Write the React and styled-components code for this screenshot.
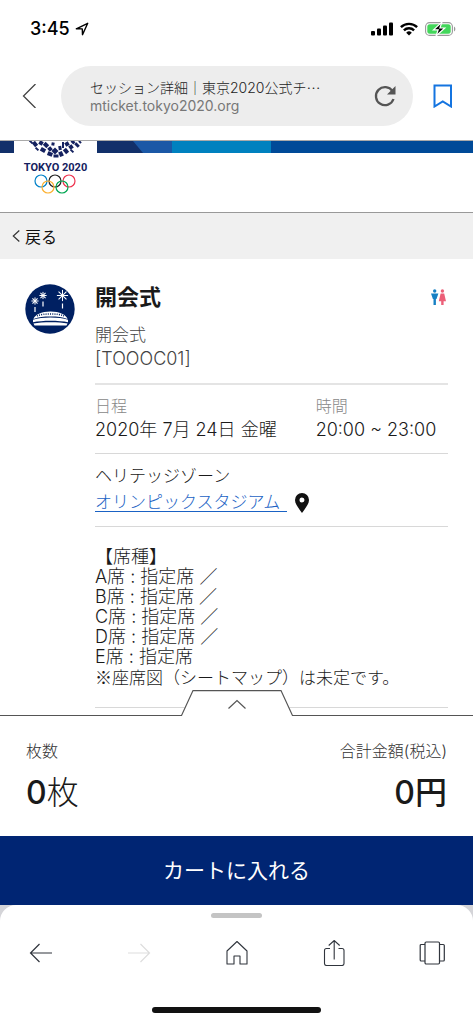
import React from "react";
import styled, { createGlobalStyle } from "styled-components";

const GlobalStyle = createGlobalStyle`
    * {
        box-sizing: border-box;
    }
    body {
        margin: 0;
        background: #fff;
        color: #1a1a1a;
        font-family: Inter, "Noto Sans CJK JP", sans-serif;
        font-size: 17px;
        font-weight: 300;
    }
    button {
        border: 0;
        padding: 0;
        background: none;
        color: inherit;
        font: inherit;
        cursor: pointer;
    }
    svg {
        display: block;
    }
    h1, h2, p, dl, dd, ul {
        margin: 0;
        padding: 0;
    }
`;

const Page = styled.div`
    min-height: 100vh;
    display: flex;
    flex-direction: column;
`;

const StatusBar = styled.div`
    height: 58px;
    padding: 0 17px 0 30px;
    display: flex;
    align-items: center;
    justify-content: space-between;
    color: #000;
`;

const StatusGroup = styled.div`
    display: flex;
    align-items: center;
    gap: ${(props) => props.$gap}px;
`;

const Clock = styled.span`
    font-size: 18px;
    font-weight: 500;
    line-height: 24px;
`;

const BrowserBar = styled.div`
    padding: 8px 18px 14px 17px;
    display: flex;
    align-items: center;
    border-bottom: 1px solid #aaa;
`;

const IconButton = styled.button`
    width: ${(props) => props.$size || 26}px;
    height: ${(props) => props.$size || 26}px;
    display: flex;
    align-items: center;
    justify-content: center;
    flex: none;
`;

const AddressBar = styled.div`
    flex: 1;
    min-width: 0;
    height: 60px;
    margin: 0 18px 0 20px;
    padding: 0 16px 0 29px;
    display: flex;
    align-items: center;
    justify-content: space-between;
    border-radius: 30px;
    background: #ededed;
`;

const Address = styled.button`
    display: flex;
    flex-direction: column;
    min-width: 0;
    text-align: left;
    font-size: 14px;
    line-height: 18px;
`;

const PageTitle = styled.span`
    color: #222;
    white-space: nowrap;
`;

const Japanese = styled.span`
    font-family: "Noto Sans CJK JP", sans-serif;
`;

const Host = styled.span`
    color: #777;
    font-weight: 400;
`;

const Brand = styled.header`
    height: 72px;
    padding-left: 14px;
    border-bottom: 1px solid #999;
    background: linear-gradient(#004a98, #004a98) 0 0 / 100% 12px no-repeat;
    display: flex;
    align-items: flex-start;
    position: relative;
`;

const Stripe = styled.svg`
    position: absolute;
    left: 0;
    top: 0;
`;

const LogoLink = styled.a`
    position: relative;
    background: #fff;
`;

const BackBar = styled.nav`
    height: 46px;
    padding: 0 12px;
    display: flex;
    align-items: center;
    background: #f0f0f0;
`;

const BackLink = styled.a`
    display: flex;
    align-items: center;
    gap: 5px;
    color: #111;
    font-size: 16px;
    font-weight: 400;
    text-decoration: none;
`;

const Session = styled.main`
    flex: 1;
    padding: 22px 25px 0;
    display: flex;
    align-items: flex-start;
    gap: 20px;
`;

const Badge = styled.div`
    padding-top: 3px;
    flex: none;
`;

const Details = styled.div`
    flex: 1;
    min-width: 0;
`;

const Section = styled.section`
    padding: ${(props) => props.$pad};
    border-bottom: ${(props) => props.$line || 1}px solid ${(props) => (props.$line ? "#e4e4e4" : "#d8d8d8")};
`;

const TitleRow = styled.div`
    display: flex;
    align-items: center;
    justify-content: space-between;
    margin-bottom: 10px;
    padding-right: 2px;
`;

const Title = styled.h1`
    font-size: 22px;
    font-weight: 700;
    line-height: 32px;
`;

const Text = styled.p`
    color: ${(props) => props.$color || "#1a1a1a"};
    font-size: ${(props) => props.$size || 17}px;
    line-height: ${(props) => props.$height || 24}px;
`;

const Schedule = styled.dl`
    display: grid;
    grid-template-columns: 5fr 3fr;
`;

const Term = styled.dt`
    color: #888;
    font-size: 16px;
    line-height: 23px;
`;

const Value = styled.dd`
    font-size: 18px;
    line-height: 24px;
    white-space: nowrap;
`;

const Venue = styled.div`
    display: flex;
    align-items: center;
    gap: 8px;
`;

const VenueLink = styled.a`
    color: #1a62c4;
    line-height: 27px;
    padding-right: 7px;
    text-decoration: none;
    background: linear-gradient(#1a62c4, #1a62c4) 0 22px / 100% 1px no-repeat;
`;

const SeatList = styled.ul`
    list-style: none;
    font-size: 18px;
    line-height: 20px;
`;

const Dock = styled.footer`
    position: sticky;
    bottom: 0;
    margin-top: -26px;
`;

const TabRow = styled.div`
    display: flex;
    align-items: flex-end;
`;

const TabEdge = styled.div`
    flex: 1;
    height: 1px;
    background: #555;
`;

const Summary = styled.div`
    padding: 21px 26px 20px;
    display: flex;
    justify-content: space-between;
    background: #fff;
`;

const Total = styled.div`
    text-align: ${(props) => props.$align || "left"};
`;

const TotalLabel = styled.h2`
    color: #333;
    font-size: 16px;
    font-weight: 300;
    line-height: 28px;
`;

const TotalValue = styled.p`
    margin-top: 5px;
    font-size: 32px;
    font-weight: ${(props) => (props.$bold ? 500 : 300)};
    line-height: 46px;
`;

const Digit = styled.span`
    font-weight: 500;
`;

const CartButton = styled.button`
    display: block;
    width: 100%;
    height: 69px;
    padding-bottom: 4px;
    background: #002573;
    color: #fff;
    font-size: 21px;
    font-weight: 400;
`;

const Browser = styled.div`
    background: #d4d4d8;
`;

const Toolbar = styled.div`
    height: 119px;
    padding: 8px 28px 11px;
    display: flex;
    flex-direction: column;
    align-items: center;
    justify-content: space-between;
    border-radius: 16px 16px 0 0;
    background: #fff;
`;

const Bar = styled.div`
    width: ${(props) => props.$width}px;
    height: ${(props) => props.$height}px;
    border-radius: 3px;
    background: ${(props) => props.$color};
`;

const ToolRow = styled.nav`
    width: 100%;
    margin-bottom: 20px;
    display: flex;
    justify-content: space-between;
`;

const seats = ["【席種】", "A席 : 指定席 ／", "B席 : 指定席 ／", "C席 : 指定席 ／", "D席 : 指定席 ／", "E席 : 指定席"];

// x, y, rotation, width, height
const tiles = [
    [31, 1, 45, 4, 2], [35, 3, 50, 5, 4], [37, 8, 45, 4, 2],
    [41, 2, 30, 4, 4], [43, 9, 30, 5, 4], [46, 4, 45, 5, 4],
    [50, 8, 50, 4, 4], [50, 13, 20, 5, 4], [53, 3, 10, 3, 3],
    [55, 10, 45, 5, 5], [56, 15, 0, 5, 3], [61, 13, 65, 5, 4],
    [60, 7, 80, 4, 3], [63, 4, 0, 2, 6], [67, 3, 60, 4, 4],
    [66, 10, 50, 5, 4], [71, 6, 55, 4, 4], [72, 10, 45, 4, 2],
    [73, 1, 45, 4, 3], [77, 4, 45, 5, 3], [80, 1, 50, 3, 2],
];

const rings = [
    [41, 40, "#0081c8"], [55, 40, "#222"], [69, 40, "#ee334e"],
    [48, 46, "#fcb131"], [62, 46, "#00a651"],
];

function Logo() {
    return (
        <svg width="83" height="60" viewBox="14 0 83 60" role="img" aria-label="TOKYO 2020">
            {tiles.map(([x, y, angle, w, h]) => (
                <rect
                    key={`${x}-${y}`}
                    x={x - w / 2}
                    y={y - h / 2}
                    width={w}
                    height={h}
                    fill="#14215f"
                    transform={`rotate(${angle} ${x} ${y})`}
                />
            ))}
            <text
                x="55.5"
                y="30"
                textAnchor="middle"
                fill="#14215f"
                fontFamily="Roboto, 'Liberation Sans', sans-serif"
                fontSize="11"
                fontWeight="700"
            >
                TOKYO 2020
            </text>
            {rings.map(([x, y, color]) => (
                <circle key={x} cx={x} cy={y} r="6" fill="none" stroke={color} strokeWidth="1.2" />
            ))}
        </svg>
    );
}

function Firework({ x, y, r }) {
    return (
        <g transform={`translate(${x} ${y})`} stroke="#fff" strokeWidth="1">
            {[0, 45, 90, 135].map((a) => (
                <path key={a} d={`M0 ${-r}V${r}`} transform={`rotate(${a})`} />
            ))}
        </g>
    );
}

function CeremonyIcon() {
    return (
        <svg width="50" height="50" viewBox="0 0 50 50" aria-hidden="true">
            <circle cx="25" cy="25" r="24.7" fill="#002062" />
            <Firework x={10} y={17} r={3.6} />
            <Firework x={18} y={11.5} r={3.6} />
            <Firework x={37.5} y={11.5} r={5.6} />
            <path d="M10 23v5M18 17.500v5M37.500 19.500v5" stroke="#fff" strokeWidth="1.2" />
            <path d="M8.500 35c1-4 8-7.500 17-7.500s16 3.500 17 7.500c-5-2-10-2.500-17-2.500S13.500 33 8.500 35z" fill="#fff" />
            <path d="M12 31.800c7-2.500 20-2.500 27 0" fill="none" stroke="#002062" strokeWidth="1.5" strokeDasharray="1 1.2" />
            <path d="M8 35.800c9-3 26-3 35 0v2.400c-9-2-26-2-35 0z" fill="#fff" />
            <path d="M8.500 39.500c9-1.800 25.500-1.800 34 0l-1 2.100H9.500z" fill="#fff" />
        </svg>
    );
}

function RestroomIcon() {
    return (
        <svg width="15" height="17" viewBox="0 0 15 17" role="img" aria-label="男女">
            <g fill="#1780c4">
                <circle cx="3.7" cy="2" r="1.7" />
                <path d="M0 4.500h7.400L5.500 10H4.900v6H2.500v-6h-.6z" />
            </g>
            <g fill="#ec5f78">
                <circle cx="11.4" cy="2" r="1.7" />
                <path d="M9.600 4.500h3.600l1.800 7.800h-2.400V16h-2.400v-3.700H7.800z" />
            </g>
        </svg>
    );
}

function App() {
    return (
        <Page>
            <GlobalStyle />
            <StatusBar>
                <StatusGroup $gap={5}>
                    <Clock>3:45</Clock>
                    <svg width="14" height="14" viewBox="0 0 14 14" fill="none" stroke="#000" strokeWidth="1.4" strokeLinejoin="round">
                        <path d="M1.300 6.800L12.700 1.300L7.500 12.700L7.300 6.900z" />
                    </svg>
                </StatusGroup>
                <StatusGroup $gap={7}>
                    <svg width="22" height="14" viewBox="0 0 22 14">
                        <rect x="0" y="9" width="4" height="4.5" rx="1" />
                        <rect x="6" y="6.5" width="4" height="7" rx="1" />
                        <rect x="12" y="3.5" width="4" height="10" rx="1" />
                        <rect x="18" y="0.5" width="4" height="13" rx="1" />
                    </svg>
                    <svg width="18" height="14" viewBox="0 0 18 14" fill="none" stroke="#000" strokeWidth="2.4">
                        <path d="M.9 5.200a11.500 11.500 0 0 1 16.200 0M3.900 8.400a7.200 7.200 0 0 1 10.200 0" />
                        <path d="M9 13.500l-2.800-2.800a4 4 0 0 1 5.600 0z" fill="#000" stroke="none" />
                    </svg>
                    <svg width="31" height="14" viewBox="0 0 31 14">
                        <rect x=".6" y=".6" width="26.8" height="12.8" rx="4" fill="none" stroke="#999" strokeWidth="1.1" />
                        <rect x="2.3" y="2.3" width="23.4" height="9.4" rx="2.5" fill="#43d75b" />
                        <path d="M29 4.500c1.800.8 1.800 4.200 0 5z" fill="#999" />
                        <path d="M17 0L8.500 7.800h4.700L11 14l8.800-8h-4.900z" fill="#000" stroke="#fff" strokeWidth="1.2" />
                    </svg>
                </StatusGroup>
            </StatusBar>
            <BrowserBar>
                <IconButton $size={24} aria-label="戻る">
                    <svg width="24" height="24" viewBox="0 0 24 24" fill="none" stroke="#444" strokeWidth="1.3">
                        <path d="M18.500 0L6.500 12l12 12" />
                    </svg>
                </IconButton>
                <AddressBar>
                    <Address>
                        <PageTitle>
                            セッション詳細｜東京2020公式チ<Japanese>…</Japanese>
                        </PageTitle>
                        <Host>mticket.tokyo2020.org</Host>
                    </Address>
                    <IconButton $size={24} aria-label="再読み込み">
                        <svg width="24" height="24" viewBox="0 0 24 24">
                            <path d="M20.500 15A9 9 0 1 1 19.500 7.200" fill="none" stroke="#555" strokeWidth="2.3" />
                            <path d="M22.500 2v8.500H14z" fill="#555" />
                        </svg>
                    </IconButton>
                </AddressBar>
                <IconButton $size={24} aria-label="ブックマーク">
                    <svg width="24" height="24" viewBox="0 0 24 24" fill="none" stroke="#1474e0" strokeWidth="2">
                        <path d="M3.500 1.500h16.500v21l-8.250-5-8.250 5z" />
                    </svg>
                </IconButton>
            </BrowserBar>
            <Brand>
                <Stripe width="271" height="12" viewBox="0 0 271 12" aria-hidden="true">
                    <path d="M0 0h271v12H0z" fill="#0081bf" />
                    <path d="M0 0h172v12H0z" fill="#1b58a6" />
                    <path d="M0 0h133l10 12H0z" fill="#12306a" />
                </Stripe>
                <LogoLink href="#">
                    <Logo />
                </LogoLink>
            </Brand>
            <BackBar>
                <BackLink href="#">
                    <svg width="8" height="14" viewBox="0 0 8 14" fill="none" stroke="#333" strokeWidth="1.2">
                        <path d="M7.300 1.500L1.300 7l6 5.500" />
                    </svg>
                    戻る
                </BackLink>
            </BackBar>
            <Session>
                <Badge>
                    <CeremonyIcon />
                </Badge>
                <Details>
                    <Section $pad="0 0 12px" $line={2}>
                        <TitleRow>
                            <Title>開会式</Title>
                            <RestroomIcon />
                        </TitleRow>
                        <Text $color="#444">開会式</Text>
                        <Text $color="#444" $size={18}>[TOOOC01]</Text>
                    </Section>
                    <Section $pad="10px 0 11px">
                        <Schedule>
                            <div>
                                <Term>日程</Term>
                                <Value>2020年 7月 24日 金曜</Value>
                            </div>
                            <div>
                                <Term>時間</Term>
                                <Value>20:00 ~ 23:00</Value>
                            </div>
                        </Schedule>
                    </Section>
                    <Section $pad="10px 0 10px">
                        <Text $height={25}>ヘリテッジゾーン</Text>
                        <Venue>
                            <VenueLink href="#">オリンピックスタジアム</VenueLink>
                            <svg width="14" height="20" viewBox="0 0 14 20" aria-hidden="true">
                                <path
                                    fillRule="evenodd"
                                    fill="#111"
                                    d="M7 0a7 7 0 0 1 7 7c0 4-3.500 8-7 13C3.500 15 0 11 0 7a7 7 0 0 1 7-7zm0 4.500a2.500 2.500 0 1 0 0 5 2.500 2.500 0 0 0 0-5z"
                                />
                            </svg>
                        </Venue>
                    </Section>
                    <Section $pad="20px 0 19px">
                        <SeatList>
                            {seats.map((seat) => (
                                <li key={seat}>{seat}</li>
                            ))}
                        </SeatList>
                        <Text $height={20}>
                            <Japanese>※</Japanese>座席図（シートマップ）は未定です。
                        </Text>
                    </Section>
                </Details>
            </Session>
            <Dock>
                <TabRow>
                    <TabEdge />
                    <button aria-label="詳細を開く">
                        <svg width="112" height="26" viewBox="0 0 112 26" fill="none" stroke="#555" strokeWidth="1.2">
                            <path d="M0 25.500L11.500.6h89L112 25.500V27H0z" fill="#fff" stroke="none" />
                            <path d="M0 25.500h.5L12 .6h88l11.500 24.900h.5" />
                            <path d="M47.500 18.500L56 10.500l8.500 8" />
                        </svg>
                    </button>
                    <TabEdge />
                </TabRow>
                <Summary>
                    <Total>
                        <TotalLabel>枚数</TotalLabel>
                        <TotalValue>
                            <Digit>0</Digit>枚
                        </TotalValue>
                    </Total>
                    <Total $align="right">
                        <TotalLabel>合計金額(税込)</TotalLabel>
                        <TotalValue $bold>
                            <Digit>0</Digit>円
                        </TotalValue>
                    </Total>
                </Summary>
                <CartButton>カートに入れる</CartButton>
                <Browser>
                    <Toolbar>
                        <Bar $width={51} $height={5} $color="#c4c4c4" />
                        <ToolRow>
                            <IconButton aria-label="前のページ">
                                <svg width="26" height="26" viewBox="0 0 26 26" fill="none" stroke="#30353d" strokeWidth="1.2">
                                    <path d="M24 13H2.500M11.500 4l-9 9 9 9" />
                                </svg>
                            </IconButton>
                            <IconButton aria-label="次のページ" disabled>
                                <svg width="26" height="26" viewBox="0 0 26 26" fill="none" stroke="#ddd" strokeWidth="1.2">
                                    <path d="M2 13h21.500M14.500 4l9 9-9 9" />
                                </svg>
                            </IconButton>
                            <IconButton aria-label="ホーム">
                                <svg width="26" height="26" viewBox="0 0 26 26" fill="none" stroke="#30353d" strokeWidth="1.1" strokeLinejoin="round">
                                    <path d="M13 1.500l10 9.500v13h-7v-8h-6v8H3V11z" />
                                </svg>
                            </IconButton>
                            <IconButton aria-label="共有">
                                <svg width="26" height="26" viewBox="0 0 26 26" fill="none" stroke="#30353d" strokeWidth="1.1">
                                    <path d="M9 8.500H5.500a2 2 0 0 0-2 2v13a2 2 0 0 0 2 2h15.500a2 2 0 0 0 2-2v-13a2 2 0 0 0-2-2h-3.500M13.200 19.500V.8M7.700 5.500L13.200.5l5.500 5" />
                                </svg>
                            </IconButton>
                            <IconButton aria-label="タブ">
                                <svg width="26" height="26" viewBox="0 0 26 26" fill="none" stroke="#30353d" strokeWidth="1.2">
                                    <rect x="6" y="2" width="14.5" height="22" rx="1.2" />
                                    <path d="M6 4.500H2.200a1 1 0 0 0-1 1v14.500a1 1 0 0 0 1 1H6M20.500 4.500h3.800a1 1 0 0 1 1 1v14.500a1 1 0 0 1-1 1h-3.800" />
                                </svg>
                            </IconButton>
                        </ToolRow>
                        <Bar $width={169} $height={6} $color="#111" />
                    </Toolbar>
                </Browser>
            </Dock>
        </Page>
    );
}

export default App;
